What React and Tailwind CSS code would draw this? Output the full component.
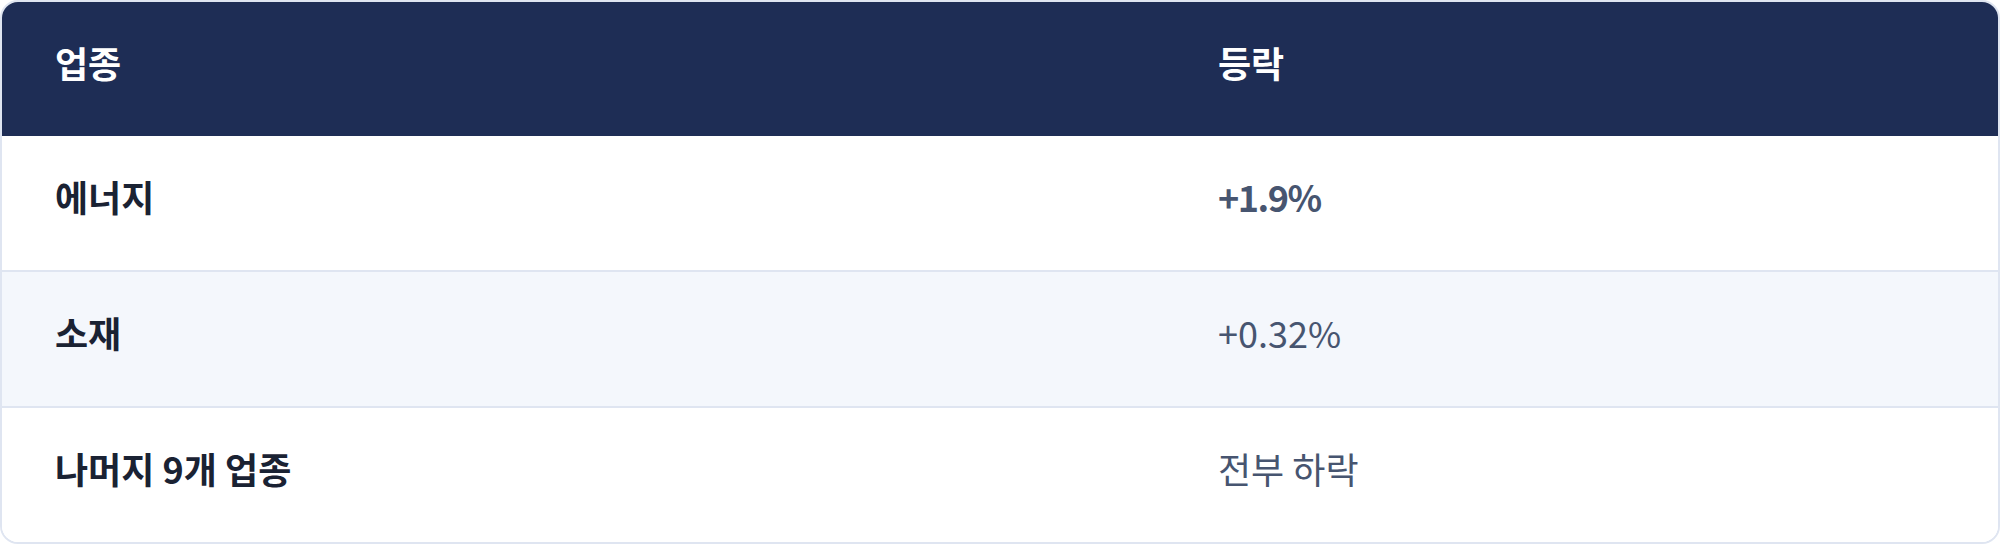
import React from 'react'

const rows = [
    { sector: '에너지', change: '+1.9%', strong: true, shaded: false },
    { sector: '소재', change: '+0.32%', strong: false, shaded: true },
    { sector: '나머지 9개 업종', change: '전부 하락', strong: false, shaded: false },
]

function App() {
    return (
        <div className="w-[2000px] h-[544px] bg-white" style={{ fontFamily: '"Noto Sans CJK KR", "Noto Sans", sans-serif' }}>
            <div className="h-full rounded-[18px] border-2 border-[#dfe5f1] overflow-hidden flex flex-col">
                {/* header */}
                <div className="grid grid-cols-[1160px_1fr] h-[134px] bg-[#1e2d55] text-white font-bold text-[36px] items-center pb-[14px]">
                    <div className="pl-[53px]">업종</div>
                    <div className="pl-[56px]">등락</div>
                </div>
                {rows.map((r, i) => (
                    <div
                        key={r.sector}
                        className={`grid grid-cols-[1160px_1fr] flex-1 items-center text-[36px] pb-[14px] ${r.shaded ? 'bg-[#f4f7fc]' : 'bg-white'} ${i > 0 ? 'border-t-2 border-[#dfe5f1]' : ''}`}
                    >
                        <div className="pl-[53px] font-bold text-[#1a2233]">{r.sector}</div>
                        <div className={`pl-[56px] text-[#475570] ${r.strong ? 'font-semibold tracking-[-1.5px]' : 'font-normal'}`}>{r.change}</div>
                    </div>
                ))}
            </div>
        </div>
    )
}

export default App
